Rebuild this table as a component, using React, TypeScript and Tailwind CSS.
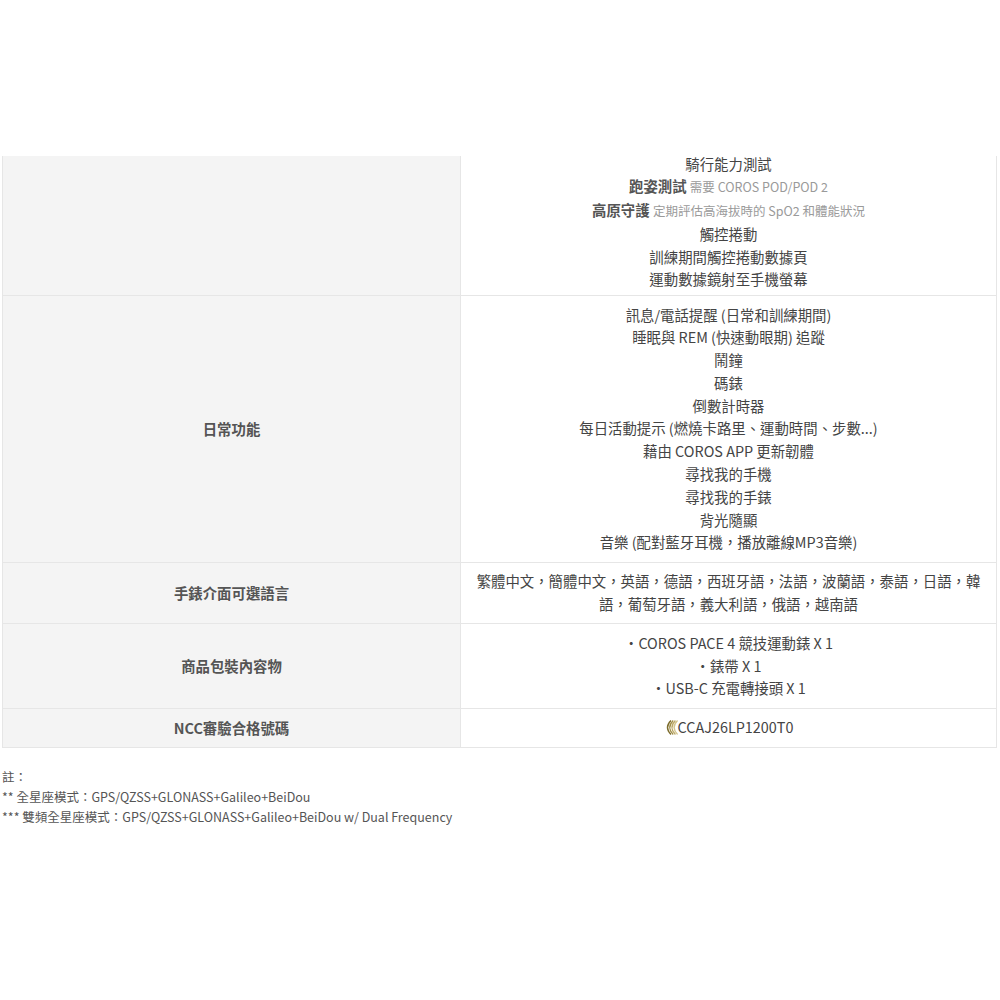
import React from 'react'

const font = { fontFamily: '"Noto Sans CJK TC", "Noto Sans", sans-serif' }

function Row({ label, children, className = '' }: { label?: string; children: React.ReactNode; className?: string }) {
  return (
    <div className={'grid grid-cols-[458px_1fr] border-b border-[#e6e6e6] ' + className}>
      <div className="flex items-center justify-center bg-[#f4f4f4] border-r border-[#e6e6e6] text-[14.4px] font-bold text-[#555]">
        {label}
      </div>
      <div className="py-[7.5px] px-2 text-center text-[14.4px] leading-[22.8px] text-[#444]">{children}</div>
    </div>
  )
}

function NccMark() {
  const arcs = [
    { x: 4, c: '#7d6d2e' },
    { x: 6.2, c: '#a08d45' },
    { x: 8.4, c: '#bba766' },
    { x: 10.6, c: '#d3c48c' },
  ]
  return (
    <svg width="14" height="17" viewBox="0 0 14 17" className="inline-block align-[-3px]">
      {arcs.map((a, i) => (
        <path
          key={i}
          d={`M${a.x + 3} 1.5 Q ${a.x - 4} 8.5 ${a.x + 3} 15.5`}
          fill="none"
          stroke={a.c}
          strokeWidth="1.4"
        />
      ))}
    </svg>
  )
}

export default function App() {
  return (
    <div className="w-[1000px] h-[1000px] bg-white overflow-hidden" style={font}>
      <div className="h-[156px]" />
      <div className="mx-[2px] w-[995px] border-x border-[#e6e6e6]">
        <Row className="h-[140px] overflow-hidden">
          <div className="-mt-[11px]">
            <div>騎行能力測試</div>
            <div>
              <span className="font-bold text-[#555]">跑姿測試</span>{' '}
              <span className="text-[12.5px] text-[#9a9a9a]">需要 COROS POD/POD 2</span>
            </div>
            <div>
              <span className="font-bold text-[#555]">高原守護</span>{' '}
              <span className="text-[12.5px] text-[#9a9a9a]">定期評估高海拔時的 SpO2 和體能狀況</span>
            </div>
            <div>觸控捲動</div>
            <div>訓練期間觸控捲動數據頁</div>
            <div>運動數據鏡射至手機螢幕</div>
          </div>
        </Row>
        <Row label="日常功能">
          <div>訊息/電話提醒 (日常和訓練期間)</div>
          <div>睡眠與 REM (快速動眼期) 追蹤</div>
          <div>鬧鐘</div>
          <div>碼錶</div>
          <div>倒數計時器</div>
          <div>每日活動提示 (燃燒卡路里、運動時間、步數...)</div>
          <div>藉由 COROS APP 更新韌體</div>
          <div>尋找我的手機</div>
          <div>尋找我的手錶</div>
          <div>背光隨顯</div>
          <div>音樂 (配對藍牙耳機，播放離線MP3音樂)</div>
        </Row>
        <Row label="手錶介面可選語言">
          <div className="whitespace-nowrap">繁體中文，簡體中文，英語，德語，西班牙語，法語，波蘭語，泰語，日語，韓</div>
          <div className="whitespace-nowrap">語，葡萄牙語，義大利語，俄語，越南語</div>
        </Row>
        <Row label="商品包裝內容物">
          <div>・COROS PACE 4 競技運動錶 X 1</div>
          <div>・錶帶 X 1</div>
          <div>・USB-C 充電轉接頭 X 1</div>
        </Row>
        <Row label="NCC審驗合格號碼">
          <div>
            <NccMark />
            CCAJ26LP1200T0
          </div>
        </Row>
      </div>
      <div className="mt-[19px] px-[2px] text-[12.5px] leading-[20px] text-[#555]">
        <div>註：</div>
        <div>** 全星座模式：GPS/QZSS+GLONASS+Galileo+BeiDou</div>
        <div>*** 雙頻全星座模式：GPS/QZSS+GLONASS+Galileo+BeiDou w/ Dual Frequency</div>
      </div>
    </div>
  )
}
